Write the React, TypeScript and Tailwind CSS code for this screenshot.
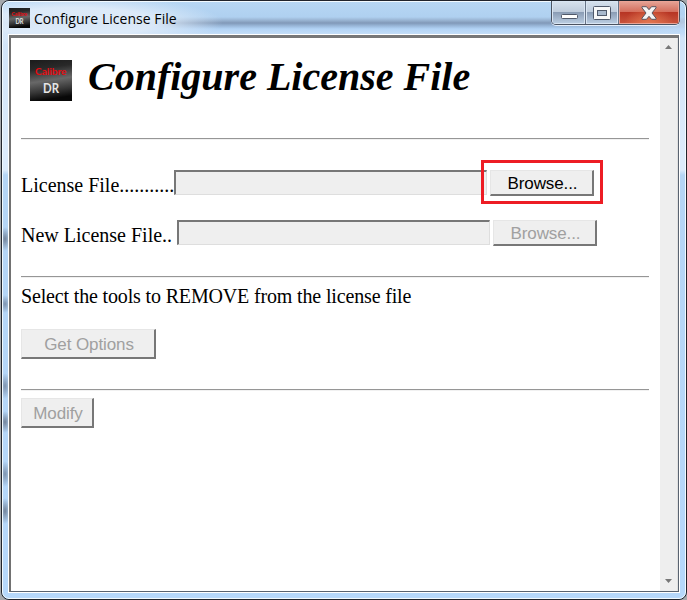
import type { ReactNode } from 'react';

function Logo({ className }: { className: string }) {
  return (
    <svg viewBox="0 0 42 40" preserveAspectRatio="none" className={`overflow-visible ${className}`}>
      <defs>
        <linearGradient id="metal" x1="0" y1="0" x2="0.15" y2="1">
          <stop offset="0" stopColor="#1b1b1b" />
          <stop offset="0.25" stopColor="#292929" />
          <stop offset="0.55" stopColor="#686868" />
          <stop offset="0.8" stopColor="#363636" />
          <stop offset="1" stopColor="#080808" />
        </linearGradient>
      </defs>
      <rect width="42" height="40" fill="url(#metal)" />
      <text x="5" y="15" textLength="31.500" lengthAdjust="spacingAndGlyphs" fontFamily="Lato, sans-serif" fontSize="10" fontWeight="700" fill="#e80a10">Calibre</text>
      <text x="13" y="32" textLength="16" lengthAdjust="spacingAndGlyphs" fontFamily="Lato, sans-serif" fontSize="13.5" fontWeight="700" fill="#e6e6e6">DR</text>
    </svg>
  );
}

function Rule() {
  return <div className="h-0.5 w-[628px] border-t border-[#969696] border-b border-b-[#f1f1f1]" />;
}

function Button({ children, className }: { children: ReactNode; className: string }) {
  return (
    <button className={`block shrink-0 border-t border-l border-r-2 border-b-2 border-t-[#e6e6e6] border-l-[#e6e6e6] border-r-[#777] border-b-[#777] bg-[#efefef] pt-[3px] pl-0.5 text-center font-['Liberation_Sans',Arial,sans-serif] text-[17px] leading-[20px] tracking-[-0.1px] whitespace-nowrap ${className}`}>
      {children}
    </button>
  );
}

function Field({ className }: { className: string }) {
  return <input disabled className={`block h-[25px] shrink-0 border-t-2 border-l-2 border-r border-b border-t-[#777] border-l-[#777] border-r-[#dedede] border-b-[#dedede] bg-[#efefef] ${className}`} />;
}

function TitleBar() {
  return (
    <header className="flex h-8 shrink-0 items-start">
      <div className="flex flex-1 items-start pt-1.5 pl-1.5">
        <Logo className="h-5 w-[21px]" />
        <span className="ml-1 font-['Open_Sans','Noto_Sans',sans-serif] text-[14px] leading-[22px] tracking-[0.04px] whitespace-nowrap text-black">Configure License File</span>
      </div>
      <div className="mr-[5px] -mt-px flex h-[24px] w-[129px] overflow-hidden rounded-b-[5px] border border-t-0 border-[#4b5361] shadow-[0_1px_0_#e5effb]">
        <div className="flex w-[34px] items-center justify-center border-r border-[#667386] bg-[linear-gradient(#d7e2ed_0%,#bfccdc_46%,#8b9db5_50%,#bdd0e4_100%)] shadow-[inset_0_0_0_1px_#d9e5f2]">
          <svg className="mt-[8px] ml-0.5 h-[6px] w-[17px]" viewBox="0 0 17 6"><rect x=".5" y=".5" width="16" height="4" rx="1" fill="#fff" stroke="#50596a" /></svg>
        </div>
        <div className="flex w-[33px] items-center justify-center border-r border-[#667386] bg-[linear-gradient(#d7e2ed_0%,#bfccdc_46%,#8b9db5_50%,#bdd0e4_100%)] shadow-[inset_0_0_0_1px_#d9e5f2]">
          <svg className="h-[14px] w-[18px]" viewBox="0 0 18 14"><rect x=".5" y=".5" width="17" height="13" rx="1" fill="#f8f8f8" stroke="#50596a" /><rect x="4.5" y="4.5" width="9" height="5" fill="#a9b9cd" stroke="#50596a" /></svg>
        </div>
        <div className="flex flex-1 items-center justify-center bg-[radial-gradient(ellipse_at_50%_110%,#e77b52_0%,transparent_60%),linear-gradient(#e6a598_0%,#d46f5e_46%,#b73524_50%,#c9553d_100%)] shadow-[inset_0_0_0_1px_#eaa496]">
          <svg className="h-[14px] w-[16px]" viewBox="0 0 16 14"><path d="M1 .7h4.500L8 3.700 10.500.7H15v1.100L11 7l4 5.200v1.100h-4.500L8 10.300l-2.500 3H1v-1.100L5 7 1 1.800z" fill="#f4f4f4" stroke="#59545f" strokeLinejoin="round" /></svg>
        </div>
      </div>
    </header>
  );
}

function Scrollbar() {
  return (
    <div className="flex w-[18px] shrink-0 flex-col items-center justify-between border-r border-[#e0e0e0] bg-[#eee] pt-[7px] pb-[8px]">
      <svg className="h-1 w-[7px]" viewBox="0 0 7 4"><path d="M3.500 0 7 4H0z" fill="#777" /></svg>
      <svg className="h-1 w-[7px]" viewBox="0 0 7 4"><path d="M0 0h7L3.500 4z" fill="#777" /></svg>
    </div>
  );
}

export default function App() {
  return (
    <div className="h-[600px] w-[687px] overflow-hidden bg-[#a5a8ac] pl-px">
      <div className="h-full w-full overflow-hidden rounded-[8px] border border-[#20242c] bg-[#b6d5f5]">
        <div className="flex h-full flex-col rounded-[7px] border border-[#f2faff] bg-[radial-gradient(ellipse_6px_12px_at_2px_237px,#74859c,transparent),radial-gradient(ellipse_6px_9px_at_2px_302px,#7f94af,transparent),radial-gradient(ellipse_6px_13px_at_2px_384px,#7f94af,transparent),radial-gradient(ellipse_6px_11px_at_2px_420px,#74859c,transparent),radial-gradient(ellipse_6px_13px_at_2px_472px,#7f94af,transparent),radial-gradient(ellipse_6px_13px_at_2px_509px,#74859c,transparent),radial-gradient(ellipse_150px_26px_at_70px_20px,rgba(222,235,249,.95)_55%,transparent),radial-gradient(ellipse_70px_10px_at_690px_22px,rgba(205,225,247,.8),transparent),linear-gradient(#b7d7f4_0px,#afd0f0_15px,#9bb6d4_18px,#8199b8_21px,#9ab8da_24px,#b3d4f6_27px,#d1e4f8_36px,#dcebfb_150px,#dcebfb_168px,#b5d5f5_173px,#b6d8fb_100%)]">
          <TitleBar />
          <div className="mr-[5px] mb-[5px] ml-[5px] flex min-h-0 flex-1 border border-white">
            <div className="flex min-h-0 flex-1 border-t-[3px] border-r border-b border-l-2 border-t-[#777] border-r-[#596370] border-b-[#596370] border-l-[#717171] bg-white">
              <main className="flex min-w-0 flex-1 flex-col pl-[10px] font-['Liberation_Serif','Times_New_Roman',serif] text-[20px] text-black">
                <div className="flex h-[100px] items-start">
                  <Logo className="mt-[22px] ml-[9px] h-[41px] w-[42px] shrink-0" />
                  <h1 className="mt-[16px] ml-4 text-[40px] leading-[46px] font-bold whitespace-nowrap italic">Configure License File</h1>
                </div>
                <Rule />
                <div className="mt-[20px] flex h-[44px] w-[582px] items-stretch">
                  <label className="w-[153px] shrink-0 pt-[14px] leading-[23px] whitespace-nowrap">License File...........</label>
                  <Field className="mt-[10px] w-[313px]" />
                  <div className="relative -ml-[6px] flex w-[122px] shrink-0 border-[3px] border-[#ed1c24]">
                    <Button className="mt-[7px] ml-[6px] h-[26px] w-[104px] text-black">Browse...</Button>
                  </div>
                </div>
                <div className="mt-[16px] flex h-[56px] items-start">
                  <label className="w-[156px] shrink-0 pt-[4px] leading-[23px] whitespace-nowrap">New License File..</label>
                  <Field className="w-[313px]" />
                  <Button className="ml-[3px] h-[26px] w-[104px] text-[#a0a0a0]">Browse...</Button>
                </div>
                <Rule />
                <p className="mt-[7px] leading-[23px] tracking-[-0.155px] whitespace-nowrap">Select the tools to REMOVE from the license file</p>
                <Button className="mt-[21px] mb-[30px] h-[30px] w-[135px] text-[#a0a0a0]">Get Options</Button>
                <Rule />
                <Button className="mt-[7px] h-[30px] w-[73px] text-[#a0a0a0]">Modify</Button>
              </main>
              <Scrollbar />
            </div>
          </div>
        </div>
      </div>
    </div>
  );
}
